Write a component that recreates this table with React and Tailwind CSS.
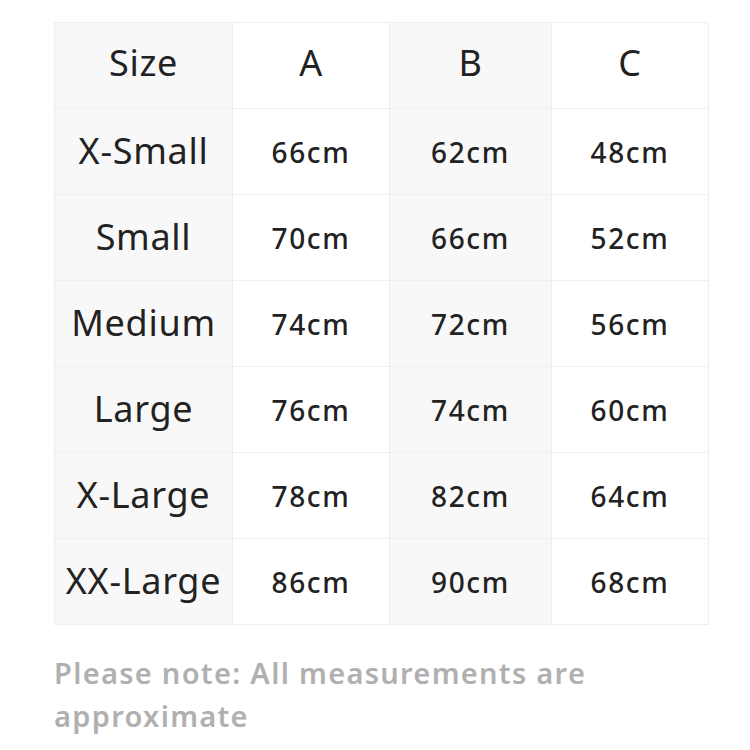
import React from "react";

const rows = [
  ["X-Small", "66cm", "62cm", "48cm"],
  ["Small", "70cm", "66cm", "52cm"],
  ["Medium", "74cm", "72cm", "56cm"],
  ["Large", "76cm", "74cm", "60cm"],
  ["X-Large", "78cm", "82cm", "64cm"],
  ["XX-Large", "86cm", "90cm", "68cm"],
];

const colBg = ["bg-[#f8f8f8]", "bg-white", "bg-[#f8f8f8]", "bg-white"];
const colW = ["w-[178px]", "w-[157px]", "w-[162px]", "w-[157px]"];

export default function App() {
  return (
    <div className="min-h-[750px] w-[750px] bg-white pt-[22px] pl-[54px] font-['Noto_Sans',sans-serif] text-[#222]">
      {/* SIZE TABLE */}
      <table className="w-[654px] border-collapse border border-[#efefef] table-fixed">
        <thead>
          <tr>
            {["Size", "A", "B", "C"].map((h, i) => (
              <th
                key={h}
                className={`${colBg[i]} ${colW[i]} h-[86px] pb-[5px] border border-[#efefef] text-center text-[36px] tracking-[0.7px] font-normal`}
              >
                {h}
              </th>
            ))}
          </tr>
        </thead>
        <tbody>
          {rows.map((r) => (
            <tr key={r[0]}>
              {r.map((c, i) => (
                <td
                  key={i}
                  className={`${colBg[i]} h-[86px] border border-[#efefef] text-center ${
                    i === 0
                      ? "text-[36px] tracking-[0.7px] whitespace-nowrap pb-[2px]"
                      : "text-[28px] tracking-[1.7px] font-medium"
                  }`}
                >
                  {c}
                </td>
              ))}
            </tr>
          ))}
        </tbody>
      </table>

      {/* NOTE */}
      <p className="mt-[26px] w-[620px] text-[29px] tracking-[1.3px] leading-[43px] font-semibold text-[#b0b0b0]">
        Please note: All measurements are approximate
      </p>
    </div>
  );
}
